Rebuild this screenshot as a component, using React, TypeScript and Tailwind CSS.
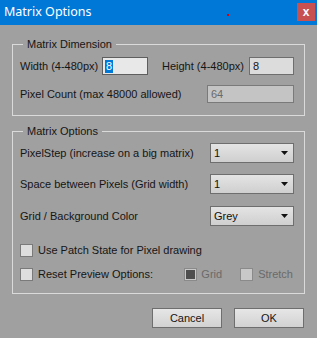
import React from "react";

const body = { fontFamily: '"Liberation Sans", Arial, sans-serif' };

function Dropdown({ value }: { value: string }) {
  return (
    <div className="ml-auto flex h-[20px] w-[84px] items-center justify-between border border-[#6e6e6e] bg-gradient-to-b from-[#e4e4e4] to-[#cfcfcf] pl-[3px] pr-[5px] text-[11px] text-[#111]">
      <span>{value}</span>
      <svg width="7" height="4" viewBox="0 0 7 4">
        <path d="M0 0 L7 0 L3.5 4 Z" fill="#111" />
      </svg>
    </div>
  );
}

function Check({ checked = false, disabled = false }: { checked?: boolean; disabled?: boolean }) {
  return (
    <span
      className={
        "flex h-[13px] w-[13px] items-center justify-center border " +
        (disabled ? "border-[#8a8a8a] bg-[#c8c8c8]" : "border-[#7a7a7a] bg-[#dedede]")
      }
    >
      {checked && <span className="h-[9px] w-[9px] bg-[#4e4e4e]" />}
    </span>
  );
}

export default function App() {
  return (
    <div className="relative flex h-[338px] w-[317px] flex-col bg-[#a0a0a0]" style={body}>
      <div className="relative flex h-[25px] items-center bg-[#0078d7] pl-[4px] pr-[2px]">
        <span
          className="text-[12.5px] text-white"
          style={{ fontFamily: '"Noto Sans", "Open Sans", sans-serif' }}
        >
          Matrix Options
        </span>
        <span className="absolute left-[227px] top-[14px] h-[2px] w-[2px] bg-[#e00000]" />
        <div className="ml-auto mt-[-1px] flex h-[18px] w-[18px] items-center justify-center bg-[#c75050] text-[12px] font-bold leading-none text-white">
          x
        </div>
      </div>

      <fieldset className="mx-[12px] mt-[13px] border border-[#dadada] pb-[12px] pl-[7px] pr-[10px]">
        <legend className="ml-[3px] px-[4px] text-[11px] leading-[13px] text-[#151515]">Matrix Dimension</legend>
        <div className="mt-[6px] flex h-[18px] items-center text-[11px] text-[#151515]">
          <span className="w-[82px]">Width (4-480px)</span>
          <div className="flex h-[18px] w-[46px] items-center border border-[#5e5e5e] bg-[#e8e8e8] pl-[2px]">
            <span className="bg-[#0078d7] px-[1px] leading-[13px] text-white">8</span>
          </div>
          <span className="ml-[14px] w-[87px]">Height (4-480px)</span>
          <div className="flex h-[18px] w-[45px] items-center border border-[#6e6e6e] bg-[#dcdcdc] pl-[3px]">
            8
          </div>
        </div>
        <div className="mt-[10px] flex h-[18px] items-center text-[11px] text-[#151515]">
          <span>Pixel Count (max 48000 allowed)</span>
          <div className="ml-auto flex h-[18px] w-[87px] items-center border border-[#7a7a7a] bg-[#c4c4c4] pl-[3px] text-[#6a6a6a]">
            64
          </div>
        </div>
      </fieldset>

      <fieldset className="mx-[12px] mt-[9px] border border-[#dadada] pb-[12px] pl-[7px] pr-[10px]">
        <legend className="ml-[3px] px-[4px] text-[11px] leading-[13px] text-[#151515]">Matrix Options</legend>
        <div className="mt-[5px] flex items-center text-[11px] text-[#151515]">
          <span>PixelStep (increase on a big matrix)</span>
          <Dropdown value="1" />
        </div>
        <div className="mt-[11px] flex items-center text-[11px] text-[#151515]">
          <span>Space between Pixels (Grid width)</span>
          <Dropdown value="1" />
        </div>
        <div className="mt-[12px] flex items-center text-[11px] text-[#151515]">
          <span>Grid / Background Color</span>
          <Dropdown value="Grey" />
        </div>
        <div className="mt-[18px] flex h-[13px] items-center text-[11px] text-[#151515]">
          <Check />
          <span className="ml-[5px]">Use Patch State for Pixel drawing</span>
        </div>
        <div className="mt-[11px] flex h-[13px] items-center text-[11px] text-[#151515]">
          <Check />
          <span className="ml-[5px]">Reset Preview Options:</span>
          <div className="ml-auto mr-[1px] flex items-center">
            <Check checked disabled />
            <span className="ml-[4px] text-[#6a6a6a]">Grid</span>
            <span className="ml-[18px]">
              <Check disabled />
            </span>
            <span className="ml-[5px] text-[#6a6a6a]">Stretch</span>
          </div>
        </div>
      </fieldset>

      <div className="mt-[14px] flex justify-end gap-[12px] pr-[13px]">
        <button className="flex h-[20px] w-[70px] items-center justify-center border border-[#6e6e6e] bg-gradient-to-b from-[#e6e6e6] to-[#d2d2d2] text-[11px] text-[#151515]">
          Cancel
        </button>
        <button className="flex h-[20px] w-[70px] items-center justify-center border border-[#6e6e6e] bg-gradient-to-b from-[#e6e6e6] to-[#d2d2d2] text-[11px] text-[#151515]">
          OK
        </button>
      </div>
    </div>
  );
}
